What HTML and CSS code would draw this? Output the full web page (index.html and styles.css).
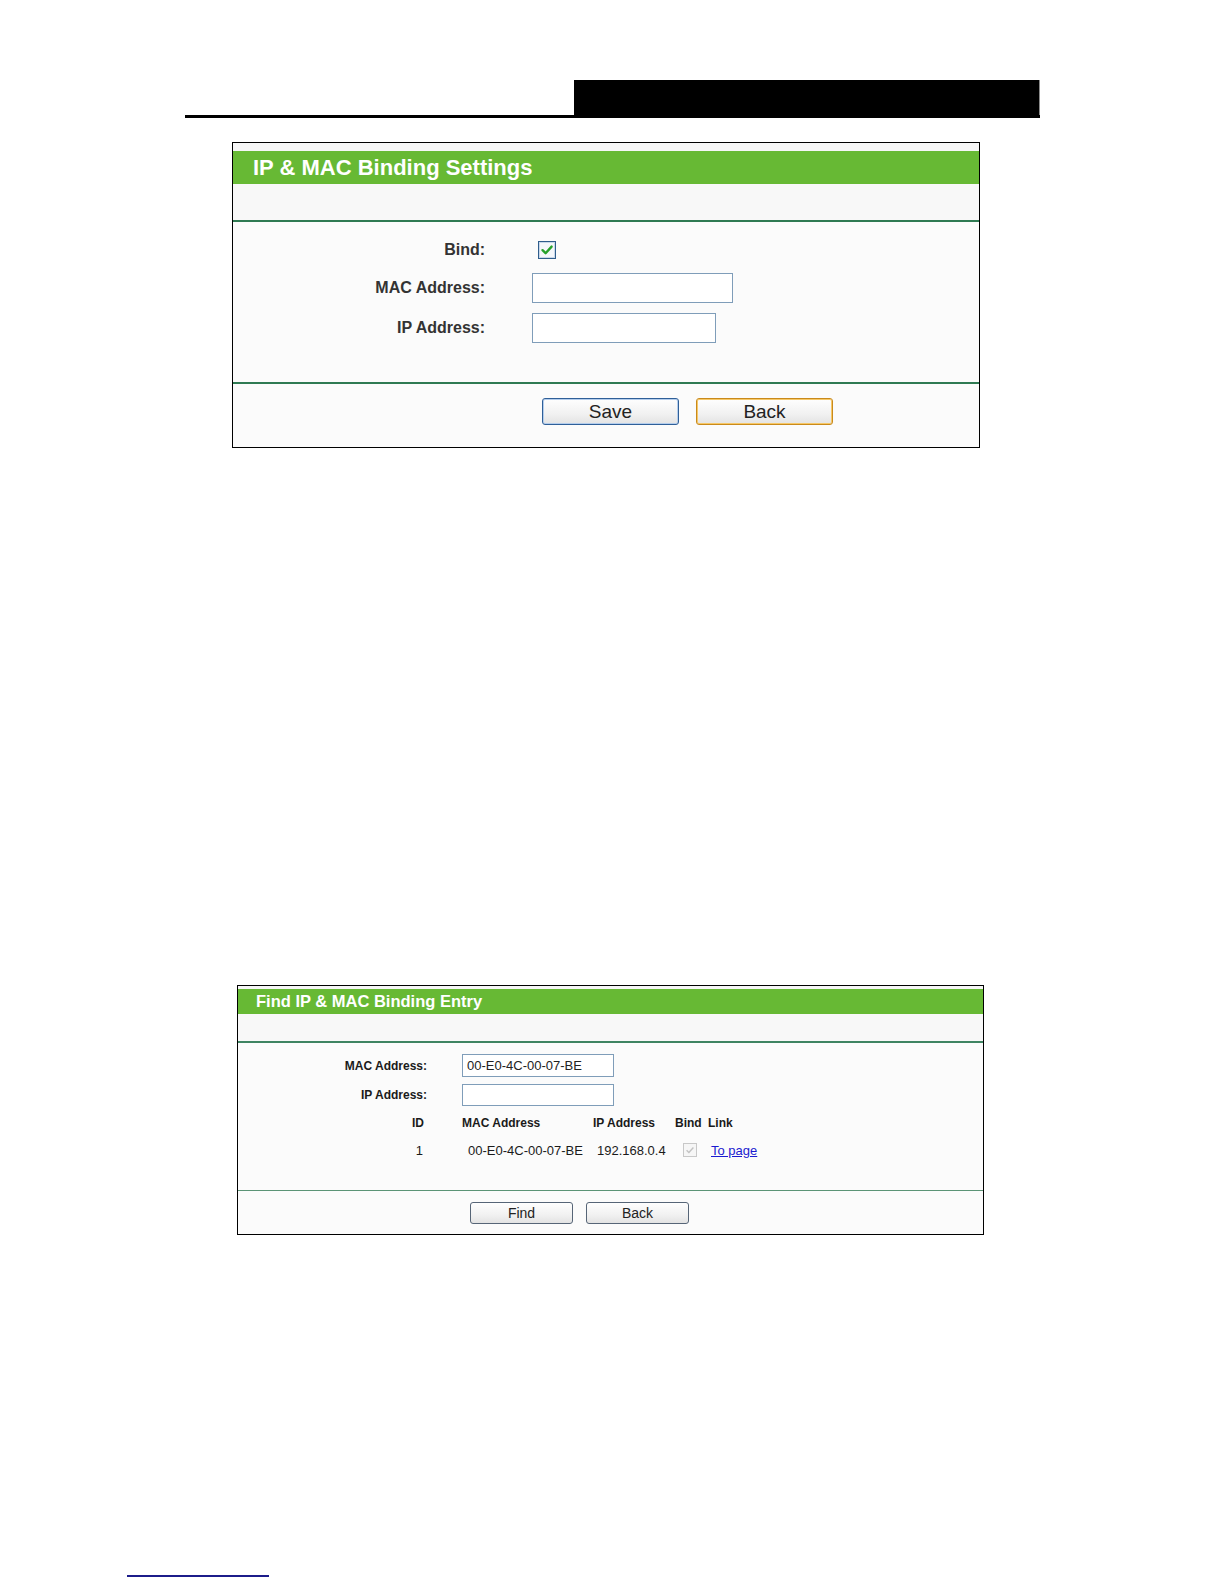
FILE: index.html
```html
<!DOCTYPE html>
<html>
  <head>
    <title>IP &amp; MAC Binding</title>
    <link rel="stylesheet" href="styles.css">
  </head>
  <body>
    <div class="page-head">
      <div class="page-head-bar"></div>
    </div>

    <!-- Settings panel -->
    <div class="panel panel-settings">
      <div class="panel-title">IP &amp; MAC Binding Settings</div>
      <div class="panel-gap"></div>
      <div class="panel-body">
        <div class="form-grid">
          <label>Bind:</label>
          <span class="check">
            <svg width="18" height="18" viewBox="0 0 18 18">
              <rect x="0.5" y="0.5" width="17" height="17" fill="#f4f7fb" stroke="#2f5d8c"/>
              <rect x="1.5" y="1.5" width="15" height="15" fill="none" stroke="#c9d8ea"/>
              <path d="M4.5 9.2 L7.6 12.2 L13.6 5.6" fill="none" stroke="#27a12b" stroke-width="2.4" stroke-linecap="round" stroke-linejoin="round"/>
            </svg>
          </span>
          <label for="mac">MAC Address:</label>
          <input type="text" id="mac" class="field field-mac">
          <label for="ip">IP Address:</label>
          <input type="text" id="ip" class="field field-ip">
        </div>
      </div>
      <div class="panel-foot">
        <button class="btn btn-save">Save</button>
        <button class="btn btn-back">Back</button>
      </div>
    </div>

    <!-- Find panel -->
    <div class="panel panel-find">
      <div class="panel-title">Find IP &amp; MAC Binding Entry</div>
      <div class="panel-gap"></div>
      <div class="panel-body">
        <div class="form-grid">
          <label for="find-mac">MAC Address:</label>
          <input type="text" id="find-mac" class="field field-mac" value="00-E0-4C-00-07-BE">
          <label for="find-ip">IP Address:</label>
          <input type="text" id="find-ip" class="field field-ip">
        </div>
        <div class="entry-table">
          <div class="th th-id">ID</div>
          <div class="th th-mac">MAC Address</div>
          <div class="th">IP Address</div>
          <div class="th">Bind</div>
          <div class="th">Link</div>

          <div class="td td-id">1</div>
          <div class="td td-mac">00-E0-4C-00-07-BE</div>
          <div class="td td-ip">192.168.0.4</div>
          <div class="td td-bind">
            <svg width="14" height="14" viewBox="0 0 14 14">
              <rect x="0.5" y="0.5" width="13" height="13" fill="#f6f6f6" stroke="#c8c8c8"/>
              <path d="M3.6 7.2 L5.9 9.4 L10.4 4.6" fill="none" stroke="#c2c2c2" stroke-width="1.4"/>
            </svg>
          </div>
          <div class="td td-link"><a href="#">To page</a></div>
        </div>
      </div>
      <div class="panel-foot">
        <button class="btn">Find</button>
        <button class="btn">Back</button>
      </div>
    </div>

    <div class="foot-rule"></div>
  </body>
</html>
```

FILE: styles.css
```css
/* Reset default styles */
body, label, input, button {
  margin: 0;
  padding: 0;
  font-family: "Liberation Sans", Arial, sans-serif;
  box-sizing: border-box;
}

body {
  background-color: #ffffff;
  color: #333333;
}

/* Page header */
.page-head {
  display: flex;
  justify-content: flex-end;
  width: 855px;
  margin: 80px 0 0 185px;
  border-bottom: 3px solid #000000;
}

.page-head-bar {
  width: 465px;
  height: 35px;
  background-color: #000000;
  border-right: 1px solid #8a8a8a;
}

/* Panel styles */
.panel {
  box-sizing: border-box;
  border: 1px solid #000000;
  background-color: #f6f6f6;
}

.panel-title {
  background-color: #67b934;
  color: #ffffff;
  font-weight: bold;
}

.panel-gap {
  background-color: #f8f8f8;
}

.panel-body {
  background-color: #fbfbfb;
}

.panel-foot {
  display: flex;
  background-color: #fbfbfb;
}

.form-grid {
  display: grid;
  align-items: center;
}

.form-grid label {
  text-align: right;
  font-weight: bold;
}

.field {
  height: 100%;
  border: 1px solid #7f9db9;
  background-color: #ffffff;
  outline: none;
}

.btn {
  border-radius: 3px;
  background: linear-gradient(#fefefe, #f1f1f1 60%, #e3e3e3);
  color: #222222;
  cursor: pointer;
}

/* Settings panel */
.panel-settings {
  width: 748px;
  margin: 24px 0 0 232px;
}

.panel-settings .panel-title {
  margin-top: 8px;
  height: 33px;
  line-height: 33px;
  padding-left: 20px;
  font-size: 22px;
}

.panel-settings .panel-gap {
  height: 36px;
  border-bottom: 2px solid #2f7a52;
}

.panel-settings .panel-body {
  padding: 15px 0 39px;
  border-bottom: 2px solid #2f7a52;
}

.panel-settings .form-grid {
  grid-template-columns: 252px auto;
  grid-template-rows: 26px 30px 30px;
  column-gap: 47px;
  row-gap: 10px;
}

.panel-settings label {
  font-size: 16px;
  color: #333333;
}

.check {
  display: flex;
  margin-left: 6px;
}

.panel-settings .field-mac {
  width: 201px;
}

.panel-settings .field-ip {
  width: 184px;
}

.panel-settings .panel-foot {
  gap: 17px;
  padding: 14px 0 22px 309px;
}

.panel-settings .btn {
  width: 137px;
  height: 27px;
  font-size: 19px;
}

.btn-save {
  border: 1px solid #2f5f98;
  box-shadow: inset 0 0 0 1px #b4cdec;
}

.btn-back {
  border: 1px solid #c98a1c;
  box-shadow: inset 0 0 0 1px #f6c868;
}

/* Find panel */
.panel-find {
  width: 747px;
  margin: 537px 0 0 237px;
}

.panel-find .panel-title {
  margin-top: 3px;
  height: 25px;
  line-height: 25px;
  padding-left: 18px;
  font-size: 16.5px;
}

.panel-find .panel-gap {
  height: 27px;
  border-bottom: 2px solid #3f8462;
}

.panel-find .panel-body {
  padding: 11px 0 30px;
  border-bottom: 1px solid #5b9476;
}

.panel-find .form-grid {
  grid-template-columns: 189px auto;
  grid-template-rows: 23px 22px;
  column-gap: 35px;
  row-gap: 7px;
}

.panel-find label {
  font-size: 12px;
  color: #1a1a1a;
}

.panel-find .field {
  width: 152px;
  padding-left: 4px;
  font-size: 13px;
  color: #222222;
}

.entry-table {
  display: grid;
  grid-template-columns: 186px 169px 82px 33px auto;
  grid-template-rows: 20px 20px;
  row-gap: 7px;
  margin-top: 7px;
  align-items: center;
  font-size: 13px;
  color: #1a1a1a;
}

.th {
  font-size: 12px;
  font-weight: bold;
}

.th-id, .td-id {
  text-align: right;
}

.td-id {
  padding-right: 1px;
}

.th-mac {
  padding-left: 38px;
}

.td-mac {
  padding-left: 44px;
}

.td-ip {
  padding-left: 4px;
}

.td-bind {
  display: flex;
  padding-left: 8px;
}

.td-link {
  padding-left: 3px;
}

.td-link a {
  color: #1b1bd0;
}

.panel-find .panel-foot {
  gap: 13px;
  padding: 11px 0 10px 232px;
}

.panel-find .btn {
  width: 103px;
  height: 22px;
  font-size: 14px;
  border: 1px solid #566577;
}

/* Footnote rule */
.foot-rule {
  width: 142px;
  margin: 340px 0 0 127px;
  border-top: 2px solid #1c1c8a;
}
```
